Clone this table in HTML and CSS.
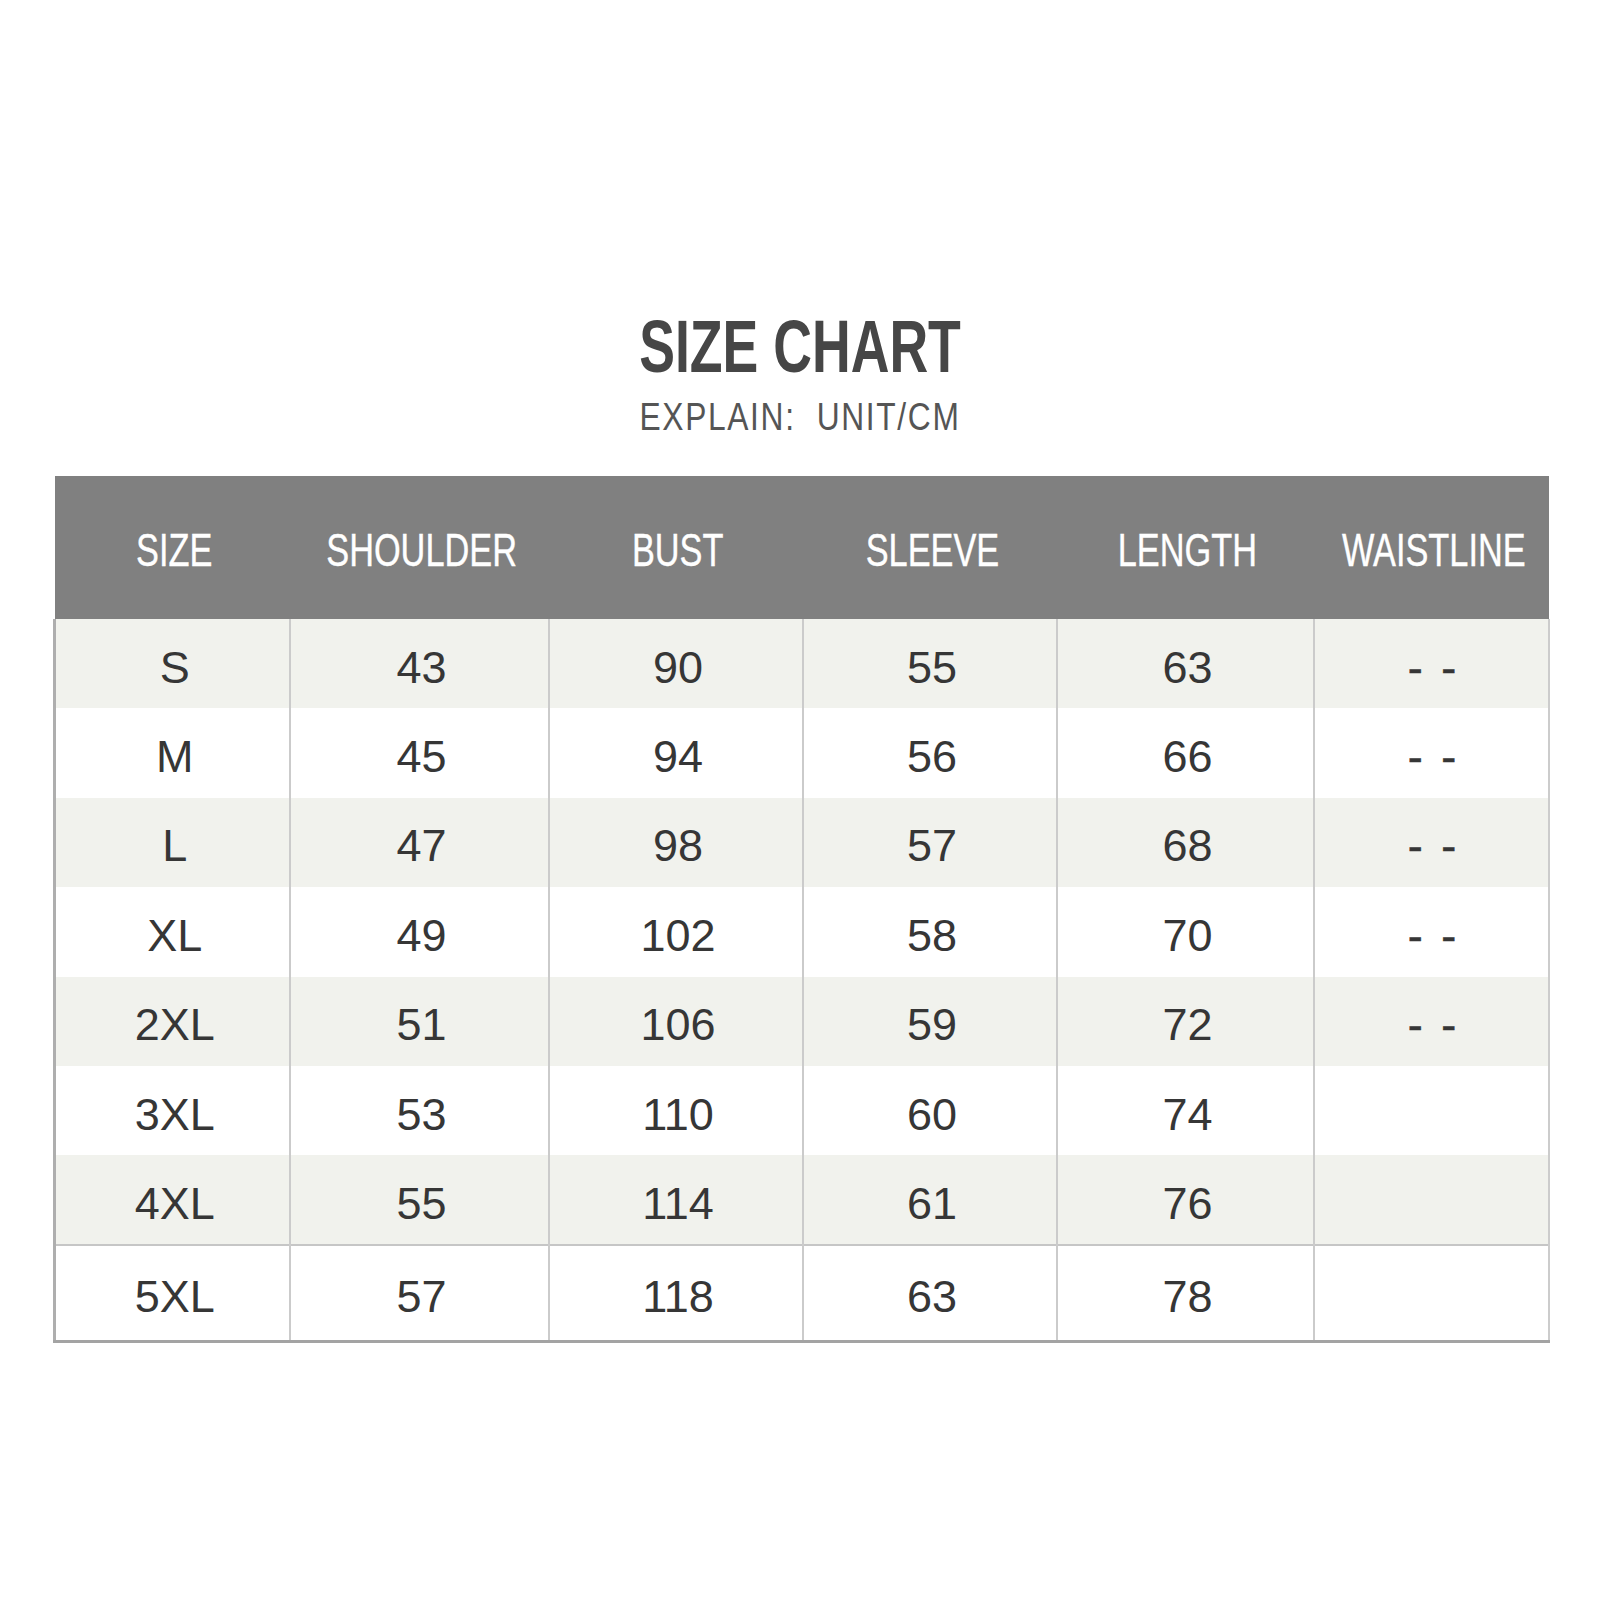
FILE: index.html
```html
<!DOCTYPE html>
<html lang="en">
<head>
<meta charset="utf-8">
<title>Size Chart</title>
<link rel="stylesheet" href="styles.css">
</head>
<body>
<div class="page">
  <h1 class="title">SIZE CHART</h1>
  <p class="subtitle">EXPLAIN:&nbsp;&nbsp;UNIT/CM</p>
  <table class="chart">
    <colgroup>
      <col class="c1"><col class="c2"><col class="c3"><col class="c4"><col class="c5"><col class="c6">
    </colgroup>
    <thead>
      <tr>
        <th><div class="hcell"><span>SIZE</span></div></th>
        <th><div class="hcell"><span>SHOULDER</span></div></th>
        <th><div class="hcell"><span>BUST</span></div></th>
        <th><div class="hcell"><span>SLEEVE</span></div></th>
        <th><div class="hcell"><span>LENGTH</span></div></th>
        <th><div class="hcell"><span>WAISTLINE</span></div></th>
      </tr>
    </thead>
    <tbody>
      <tr class="alt"><td>S</td><td>43</td><td>90</td><td>55</td><td>63</td><td class="dash">- -</td></tr>
      <tr><td>M</td><td>45</td><td>94</td><td>56</td><td>66</td><td class="dash">- -</td></tr>
      <tr class="alt"><td>L</td><td>47</td><td>98</td><td>57</td><td>68</td><td class="dash">- -</td></tr>
      <tr><td>XL</td><td>49</td><td>102</td><td>58</td><td>70</td><td class="dash">- -</td></tr>
      <tr class="alt"><td>2XL</td><td>51</td><td>106</td><td>59</td><td>72</td><td class="dash">- -</td></tr>
      <tr><td>3XL</td><td>53</td><td>110</td><td>60</td><td>74</td><td></td></tr>
      <tr class="alt"><td>4XL</td><td>55</td><td>114</td><td>61</td><td>76</td><td></td></tr>
      <tr class="last"><td>5XL</td><td>57</td><td>118</td><td>63</td><td>78</td><td></td></tr>
    </tbody>
  </table>
</div>
</body>
</html>
```

FILE: styles.css
```css
html, body {
  margin: 0;
  padding: 0;
  background: #ffffff;
}

.page {
  padding: 309px 53px 0 53px;
  font-family: "Liberation Sans", Arial, sans-serif;
}

.title {
  margin: 0;
  font-size: 75px;
  line-height: 75px;
  font-weight: 700;
  color: #464646;
  text-align: center;
  transform: scaleX(0.715);
  transform-origin: 747px 0;
}

.subtitle {
  margin: 14px 0 0 0;
  font-size: 38px;
  line-height: 38px;
  font-weight: 400;
  color: #555555;
  letter-spacing: 2px;
  text-align: center;
  transform: scaleX(0.835);
  transform-origin: 747px 0;
}

.chart {
  margin-top: 40px;
  width: 1494px;
  table-layout: fixed;
  border-collapse: collapse;
}

.c1 { width: 235px; }
.c2 { width: 259px; }
.c3 { width: 254px; }
.c4 { width: 254px; }
.c5 { width: 257px; }
.c6 { width: 235px; }

.chart th {
  height: 143px;
  padding: 0 0 0 5px;
  background: #808080;
  overflow: visible;
}

.hcell {
  display: flex;
  justify-content: center;
  align-items: center;
  height: 143px;
}

.hcell span {
  display: inline-block;
  white-space: nowrap;
  font-size: 47px;
  font-weight: 400;
  color: #ffffff;
  transform: scaleX(0.73);
  padding-top: 4px;
  -webkit-text-stroke: 0.4px #ffffff;
}

.chart td {
  height: 89.4px;
  padding: 8px 0 0 5px;
  box-sizing: border-box;
  text-align: center;
  font-size: 45px;
  color: #363636;
  border-left: 2px solid #cbcbcb;
  background: #ffffff;
}

.chart td:first-child {
  border-left: 3px solid #aeaeae;
}

.chart td:last-child {
  border-right: 2px solid #cccccc;
}

.chart tr.alt td {
  background: #f1f2ed;
}

.chart tr.last td {
  height: 97px;
  border-top: 2px solid #c6c6c6;
  border-bottom: 3px solid #a3a3a3;
}

.chart td.dash {
  letter-spacing: 3px;
  font-size: 45px;
  -webkit-text-stroke: 0.5px #363636;
}
```
